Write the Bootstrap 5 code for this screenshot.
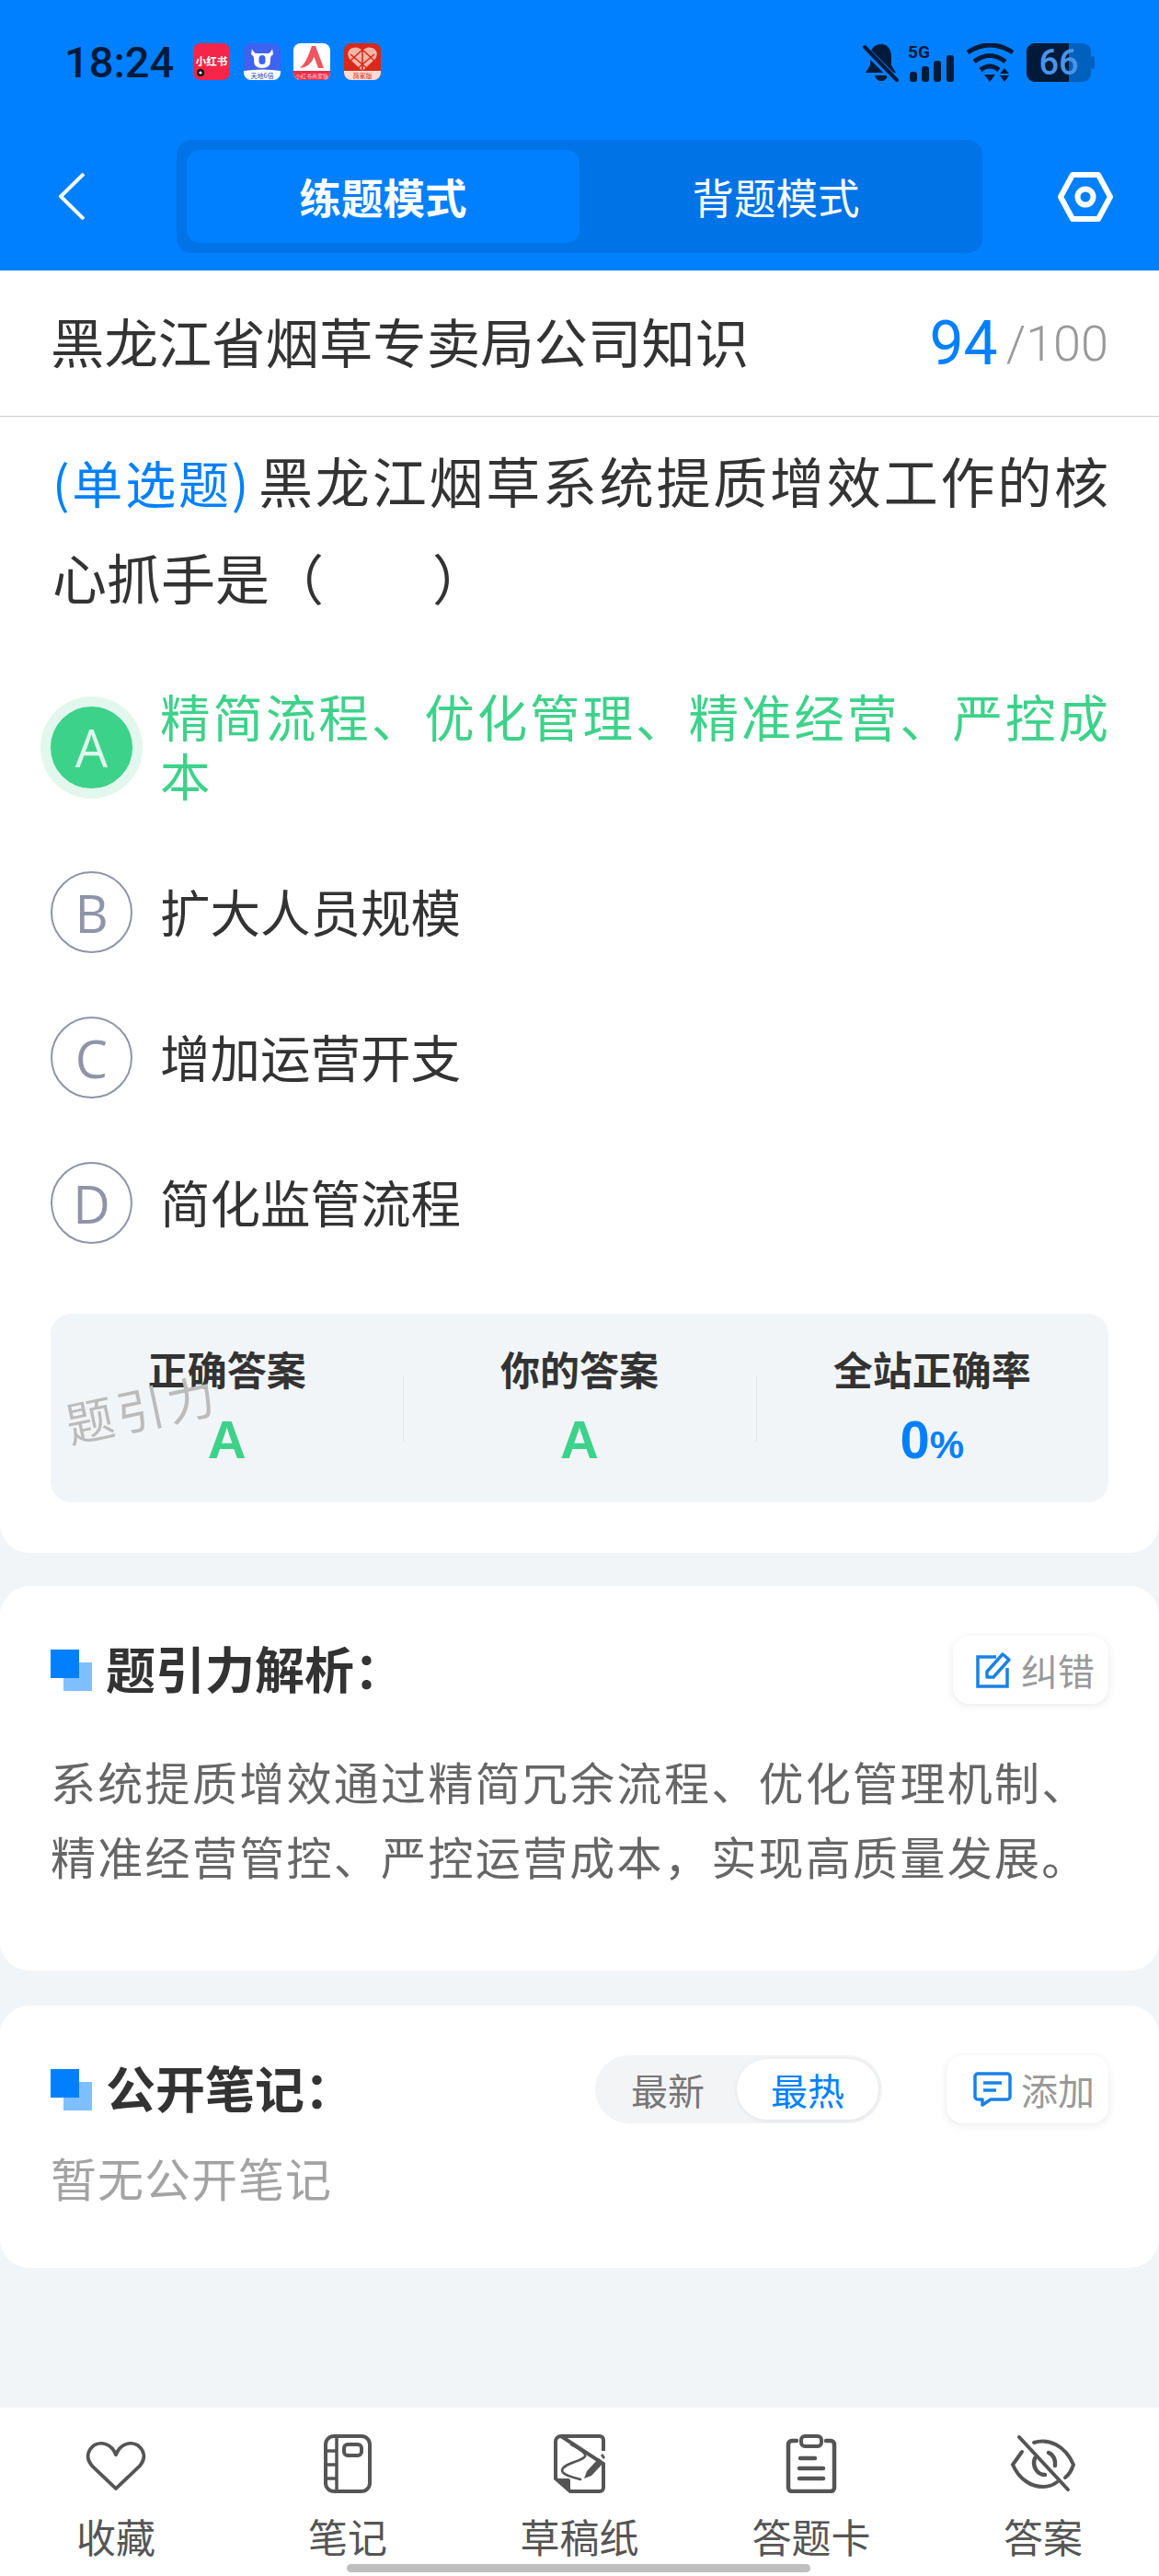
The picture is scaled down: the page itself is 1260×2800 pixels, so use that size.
<!DOCTYPE html>
<html lang="zh-CN">

<head>
    <meta charset="UTF-8">
    <meta name="viewport" content="width=device-width, initial-scale=1.0">
    <title>练题模式</title>
    <link href="https://cdn.jsdelivr.net/npm/bootstrap@5.3.3/dist/css/bootstrap.min.css" rel="stylesheet">
    <style>
        body {
            background-color: #f2f5f8;
            font-family: "Noto Sans CJK SC", "Liberation Sans", sans-serif;
            color: #333;
        }

        .screen {
            width: 1260px;
            height: 2800px;
            position: relative;
            overflow: hidden;
        }

        /* header */
        .top-head {
            background-color: #0080ff;
            height: 294px;
        }

        .status-row {
            height: 152px;
            padding: 47px 70px 0 70px;
            color: #001a3a;
        }

        .clock {
            font-family: Roboto, sans-serif;
            font-size: 47px;
            font-weight: 500;
            line-height: 42px;
            margin-right: 23px;
            width: 117px;
        }

        .app-ico {
            width: 40px;
            height: 40px;
            margin-right: 14.5px;
            display: block;
        }

        .sys-ico {
            display: block;
        }

        .mode-row {
            height: 123px;
            padding: 0 50px 0 64px;
        }

        .mode-switch {
            width: 876px;
            height: 123px;
            margin-left: 100px;
            margin-right: 82px;
            padding: 11px;
            background-color: #0073e6;
            border-radius: 16px;
        }

        .mode-btn {
            flex: 1 1 0;
            color: #fff;
            font-size: 45.5px;
            border-radius: 14px;
        }

        .mode-btn.on {
            background-color: #0080ff;
            font-weight: 700;
        }

        /* question card */
        .qcard {
            background-color: #fff;
            height: 1394px;
            border-radius: 0 0 32px 32px;
            position: relative;
        }

        .title-row {
            height: 159px;
            padding: 0 55px 6px 55px;
            border-bottom: 1px solid #ccc;
        }

        .title-text {
            font-size: 58.4px;
            color: #333;
        }

        .score-box {
            margin-top: 6px;
        }

        .score-now {
            font-family: Roboto, sans-serif;
            font-weight: 400;
            font-size: 66px;
            color: #0080ff;
        }

        .score-all {
            font-family: Roboto, sans-serif;
            font-weight: 300;
            font-size: 54px;
            color: #999;
            margin-left: 9px;
        }

        .qtext {
            padding: 16px 55px 0 57px;
            font-size: 59px;
            line-height: 105px;
            text-align: justify;
            margin-bottom: 67px;
        }

        .qtype {
            color: #0080ff;
            font-size: 55px;
            line-height: 1;
            margin-right: 8px;
        }

        .opt-row {
            padding: 0 55px 0 55px;
            margin-bottom: 69px;
        }

        .opt-ball {
            width: 89px;
            height: 89px;
            flex: none;
            border-radius: 50%;
            border: 2.5px solid #9094a8;
            color: #8f94a8;
            font-family: "Open Sans", sans-serif;
            font-size: 56px;
            font-weight: 400;
            margin-right: 30px;
        }

        .opt-ball.ok {
            background-color: #3dd28a;
            border-color: #3dd28a;
            color: #dff8ec;
            box-shadow: 0 0 0 11px #e2f7ed;
        }

        .opt-text {
            font-size: 54.5px;
            line-height: 64px;
            padding-bottom: 4px;
            color: #333;
            text-align: justify;
        }

        .opt-text.ok {
            color: #3dd28a;
        }

        .stat-box {
            margin: 76px 55px 0 55px;
            height: 205px;
            background-color: #f2f5f8;
            border-radius: 22px;
            position: relative;
        }

        .stat-col {
            flex: 1 1 0;
            text-align: center;
            padding-top: 29px;
            position: relative;
        }

        .stat-col + .stat-col::before {
            content: "";
            position: absolute;
            left: 0;
            top: 67px;
            height: 72px;
            width: 1px;
            background-color: #e3e6ea;
        }

        .stat-label {
            font-size: 43px;
            font-weight: 700;
            line-height: 60px;
            color: #333;
        }

        .stat-val {
            font-family: "Liberation Sans", sans-serif;
            font-size: 58px;
            font-weight: 700;
            line-height: 70px;
            margin-top: 13px;
        }

        .stat-val small {
            font-size: 42px;
            font-weight: 700;
        }

        .c-green {
            color: #3dd28a;
        }

        .c-blue {
            color: #0080ff;
        }

        .wmark {
            position: absolute;
            left: 15px;
            top: 72px;
            font-size: 52px;
            letter-spacing: 4px;
            line-height: 60px;
            color: #bbb;
            transform: rotate(-12deg);
            pointer-events: none;
        }

        /* analysis, notes */
        .info-card {
            background-color: #fff;
            border-radius: 32px;
            padding: 54px 55px 0 55px;
            margin-top: 36px;
        }

        .sq-ico {
            position: relative;
            width: 45px;
            height: 45px;
            flex: none;
            margin-right: 15px;
        }

        .sq-ico::before,
        .sq-ico::after {
            content: "";
            position: absolute;
            width: 31px;
            height: 31px;
        }

        .sq-ico::before {
            right: 0;
            bottom: 0;
            background-color: #80bfff;
        }

        .sq-ico::after {
            left: 0;
            top: 0;
            background-color: #0080ff;
        }

        .info-head {
            font-size: 54px;
            font-weight: 700;
            color: #333;
            line-height: 70px;
            padding-bottom: 4px;
        }

        .mini-btn {
            height: 74px;
            background-color: #fff;
            border-radius: 18px;
            box-shadow: 0 2px 10px rgba(0, 0, 0, 0.09);
            color: #999;
            font-size: 40px;
            padding: 0 15px 0 25px;
        }

        .mini-btn.wide {
            padding-left: 29px;
        }

        .mini-btn svg {
            margin-right: 10px;
        }

        .info-body {
            font-size: 49px;
            letter-spacing: 2.3px;
            line-height: 81px;
            color: #666;
            margin-top: 43px;
            white-space: nowrap;
        }

        .pill-switch {
            width: 312px;
            height: 74px;
            padding: 4px;
            background-color: #f3f4f6;
            border-radius: 37px;
            font-size: 40px;
            color: #777;
            margin-right: 70px;
        }

        .pill-switch > div {
            flex: 1 1 0;
            border-radius: 33px;
        }

        .pill-switch .on {
            flex: 0 0 154px;
            background-color: #fff;
            color: #0080ff;
            box-shadow: 0 1px 5px rgba(0, 0, 0, 0.08);
        }

        .empty-note {
            font-size: 50px;
            letter-spacing: 1px;
            color: #a3a3a3;
            line-height: 60px;
            margin-top: 28px;
        }

        /* bottom tabs */
        .tab-bar {
            position: absolute;
            left: 0;
            right: 0;
            bottom: 0;
            height: 183px;
            background-color: #fff;
        }

        .tab-item {
            flex: 1 1 0;
            color: #555;
            font-size: 43px;
            line-height: 50px;
            padding-top: 29px;
        }

        .tab-ico {
            height: 64px;
            margin-bottom: 21px;
        }

        .home-bar {
            position: absolute;
            left: 377px;
            top: 2787px;
            width: 504px;
            height: 9px;
            border-radius: 5px;
            background-color: #bfbfbf;
        }
    </style>
</head>

<body>
    <div class="screen d-flex flex-column">
        <!-- blue header -->
        <div class="top-head">
            <div class="status-row d-flex align-items-start">
                <div class="clock">18:24</div>
                <svg class="app-ico" viewBox="0 0 40 40">
                    <rect width="40" height="40" rx="8" fill="#f5254a" />
                    <text x="20" y="24" text-anchor="middle" font-size="11.5" font-weight="700" fill="#fff" font-family="Noto Sans CJK SC">小红书</text>
                    <circle cx="8" cy="32" r="4" fill="#111" />
                    <circle cx="8" cy="32" r="1.6" fill="#fff" />
                </svg>
                <svg class="app-ico" viewBox="0 0 40 40">
                    <rect width="40" height="40" rx="8" fill="#3d63f0" />
                    <path d="M0 30 Q20 27 40 30 V32 a8 8 0 0 1 -8 8 H8 a8 8 0 0 1 -8 -8 Z" fill="#fff" />
                    <path d="M9 6 Q11 11 14 11 H26 Q29 11 31 6 L32 12 Q29 14 29 16 V19 Q29 27 20 27 Q11 27 11 19 V16 Q11 14 8 12 Z" fill="#fff" />
                    <rect x="16.5" y="13" width="7" height="10" rx="3.5" fill="#3d63f0" />
                    <text x="20" y="37.5" text-anchor="middle" font-size="7" fill="#2140b8" font-family="Noto Sans CJK SC">天地6倍</text>
                </svg>
                <svg class="app-ico" viewBox="0 0 40 40">
                    <rect width="40" height="40" rx="8" fill="#fff" />
                    <path d="M0 30 H40 V32 a8 8 0 0 1 -8 8 H8 a8 8 0 0 1 -8 -8 Z" fill="#ea2c4e" />
                    <path d="M7 27 Q13 22 17 11 L20 3 H24 L33 27 H27 L22.5 15 Q18 26 7 27 Z" fill="#ee5560" />
                    <text x="20" y="37.5" text-anchor="middle" font-size="6" fill="#ffd4da" font-family="Noto Sans CJK SC">小红书商家版</text>
                </svg>
                <svg class="app-ico" viewBox="0 0 40 40">
                    <rect width="40" height="40" rx="8" fill="#d8291c" />
                    <path d="M0 30 H40 V32 a8 8 0 0 1 -8 8 H8 a8 8 0 0 1 -8 -8 Z" fill="#fbdcd3" />
                    <path d="M20 30 L6 17 Q2 11 7 6 Q14 2 20 8 Q26 2 33 6 Q38 11 34 17 Z" fill="#f5b6a8" />
                    <path d="M20 8 V30 M7 12 L27 29 M33 12 L13 29 M7 19 L20 7 M33 19 L20 7" stroke="#d8291c" stroke-width="1.6" fill="none" />
                    <text x="20" y="37.5" text-anchor="middle" font-size="7" fill="#d8291c" font-family="Noto Sans CJK SC">商家版</text>
                </svg>
                <div class="d-flex ms-auto">
                    <svg class="sys-ico" width="40" height="42" viewBox="0 0 40 42">
                        <path d="M20 1 C12 1 8 7 8 14 V24 L3 32 H36 L31 24 V14 C31 7 27 1 20 1 Z M13 35 H27 C26 39 23 41 20 41 C17 41 14 39 13 35 Z" fill="#001a3a" />
                        <path d="M1 5 L37 41" stroke="#0080ff" stroke-width="8" />
                        <path d="M2 4 L37 40" stroke="#001a3a" stroke-width="4" stroke-linecap="round" />
                    </svg>
                    <svg class="sys-ico ms-2" width="54" height="42" viewBox="0 0 54 42">
                        <text x="1" y="16" font-size="19" font-weight="700" fill="#001a3a" font-family="Roboto">5G</text>
                        <rect x="3" y="31" width="8" height="11" rx="3" fill="#001a3a" />
                        <rect x="16" y="25" width="8" height="17" rx="3" fill="#001a3a" />
                        <rect x="29" y="19" width="8" height="23" rx="3" fill="#001a3a" />
                        <rect x="43" y="13" width="8" height="29" rx="3" fill="#001a3a" />
                    </svg>
                    <svg class="sys-ico" width="54" height="42" viewBox="0 0 54 42" style="margin-left:10px">
                        <g fill="none" stroke="#001a3a" stroke-width="5">
                            <path d="M2 10 Q26 -6 51 10" />
                            <path d="M9 20 Q26 7 43 20" />
                            <path d="M16 29 Q26 21 36 29" />
                        </g>
                        <path d="M20 34 H32 L26 42 Z" fill="#001a3a" />
                        <path d="M42 27 L47 33 H37 Z M37 35 H47 L42 42 Z" fill="#001a3a" />
                    </svg>
                    <svg class="sys-ico" width="74" height="42" viewBox="0 0 74 42" style="margin-left:12px">
                        <rect width="70" height="42" rx="9" fill="#0060bd" />
                        <path d="M9 0 H46 V42 H9 a9 9 0 0 1 -9 -9 V9 a9 9 0 0 1 9 -9 Z" fill="#001a3a" />
                        <rect x="70" y="14" width="4" height="14" rx="2" fill="#0060bd" />
                        <text x="35" y="34" text-anchor="middle" font-size="38" font-weight="500" fill="#4a94e8" font-family="Roboto">66</text>
                    </svg>
                </div>
            </div>
            <div class="mode-row d-flex align-items-center">
                <svg width="28" height="51" viewBox="0 0 28 51" class="flex-none">
                    <path d="M27 1 L2 25.5 L27 50" fill="none" stroke="#fff" stroke-width="4" />
                </svg>
                <div class="mode-switch d-flex">
                    <div class="mode-btn on d-flex align-items-center justify-content-center">练题模式</div>
                    <div class="mode-btn d-flex align-items-center justify-content-center">背题模式</div>
                </div>
                <svg width="60" height="54" viewBox="0 0 60 54">
                    <path d="M16 3 H44 L57 27 L44 51 H16 L3 27 Z" fill="none" stroke="#fff" stroke-width="6" stroke-linejoin="round" />
                    <circle cx="30" cy="27" r="8.5" fill="none" stroke="#fff" stroke-width="6" />
                </svg>
            </div>
        </div>

        <!-- question -->
        <div class="qcard">
            <div class="title-row d-flex align-items-center justify-content-between">
                <div class="title-text">黑龙江省烟草专卖局公司知识</div>
                <div class="score-box d-flex align-items-center">
                    <span class="score-now">94</span><span class="score-all">/100</span>
                </div>
            </div>
            <div class="qtext"><span class="qtype">(单选题)</span>黑龙江烟草系统提质增效工作的核心抓手是（&emsp;&emsp;）</div>

            <div class="opt-row d-flex align-items-center">
                <div class="opt-ball ok d-flex align-items-center justify-content-center">A</div>
                <div class="opt-text ok">精简流程、优化管理、精准经营、严控成本</div>
            </div>
            <div class="opt-row d-flex align-items-center">
                <div class="opt-ball d-flex align-items-center justify-content-center">B</div>
                <div class="opt-text">扩大人员规模</div>
            </div>
            <div class="opt-row d-flex align-items-center">
                <div class="opt-ball d-flex align-items-center justify-content-center">C</div>
                <div class="opt-text">增加运营开支</div>
            </div>
            <div class="opt-row d-flex align-items-center">
                <div class="opt-ball d-flex align-items-center justify-content-center">D</div>
                <div class="opt-text">简化监管流程</div>
            </div>

            <div class="stat-box d-flex">
                <div class="stat-col">
                    <div class="stat-label">正确答案</div>
                    <div class="stat-val c-green">A</div>
                </div>
                <div class="stat-col">
                    <div class="stat-label">你的答案</div>
                    <div class="stat-val c-green">A</div>
                </div>
                <div class="stat-col">
                    <div class="stat-label">全站正确率</div>
                    <div class="stat-val c-blue">0<small>%</small></div>
                </div>
                <div class="wmark">题引力</div>
            </div>
        </div>

        <!-- analysis -->
        <div class="info-card" style="height: 418px;">
            <div class="d-flex align-items-center">
                <div class="sq-ico"></div>
                <div class="info-head">题引力解析：</div>
                <div class="mini-btn d-flex align-items-center ms-auto">
                    <svg width="39" height="40" viewBox="0 0 39 40">
                        <path d="M22 6 H2 V38 H34 V18" fill="none" stroke="#1a82e6" stroke-width="3.5" />
                        <path d="M12 22 L29 3 L36 9 L19 28 H12 Z" fill="none" stroke="#1a82e6" stroke-width="3.5" stroke-linejoin="round" />
                    </svg>
                    <span>纠错</span>
                </div>
            </div>
            <div class="info-body">系统提质增效通过精简冗余流程、优化管理机制、<br>精准经营管控、严控运营成本，实现高质量发展。</div>
        </div>

        <!-- notes -->
        <div class="info-card" style="height: 285px; margin-top: 38px;">
            <div class="d-flex align-items-center">
                <div class="sq-ico"></div>
                <div class="info-head">公开笔记：</div>
                <div class="pill-switch d-flex ms-auto">
                    <div class="d-flex align-items-center justify-content-center">最新</div>
                    <div class="on d-flex align-items-center justify-content-center">最热</div>
                </div>
                <div class="mini-btn wide d-flex align-items-center">
                    <svg width="42" height="38" viewBox="0 0 42 38">
                        <path d="M5 2 H37 a3 3 0 0 1 3 3 V27 a3 3 0 0 1 -3 3 H19 L10 36 V30 H5 a3 3 0 0 1 -3 -3 V5 a3 3 0 0 1 3 -3 Z" fill="none" stroke="#1a82e6" stroke-width="3.5" stroke-linejoin="round" />
                        <path d="M11 12 H31 M11 20 H25" stroke="#1a82e6" stroke-width="3.5" />
                    </svg>
                    <span>添加</span>
                </div>
            </div>
            <div class="empty-note">暂无公开笔记</div>
        </div>

        <!-- bottom bar -->
        <div class="tab-bar d-flex">
            <div class="tab-item d-flex flex-column align-items-center">
                <svg class="tab-ico" width="66" height="64" viewBox="0 0 66 64">
                    <path d="M33 22 C28 8 16 6 9 11 C1 18 1 27 7 35 L33 62 L59 35 C65 27 65 18 57 11 C50 6 38 8 33 22 Z" fill="none" stroke="#555" stroke-width="4" stroke-linejoin="round" transform="translate(0 2) scale(1 .92)" />
                </svg>
                <div>收藏</div>
            </div>
            <div class="tab-item d-flex flex-column align-items-center">
                <svg class="tab-ico" width="52" height="64" viewBox="0 0 52 64">
                    <rect x="2" y="2" width="48" height="60" rx="9" fill="none" stroke="#555" stroke-width="4" />
                    <path d="M14 2 V62 M2 18 H14 M2 33 H14 M2 48 H14" stroke="#555" stroke-width="3.5" fill="none" />
                    <rect x="22" y="11" width="19" height="12" rx="4" fill="none" stroke="#555" stroke-width="4" />
                </svg>
                <div>笔记</div>
            </div>
            <div class="tab-item d-flex flex-column align-items-center">
                <svg class="tab-ico" width="56" height="64" viewBox="0 0 56 64">
                    <path d="M8 2 H50 a4 4 0 0 1 4 4 V18 M54 32 V58 a4 4 0 0 1 -4 4 H18 L2 48 V8 a6 6 0 0 1 6 -6 Z" fill="none" stroke="#555" stroke-width="4" />
                    <path d="M2 48 H16 a2 2 0 0 1 2 2 V62 Z" fill="#555" />
                    <path d="M19 11 C26 15 36 20 34 24 C30 30 11 31 9 39 C9 44 21 47 29 49" fill="none" stroke="#555" stroke-width="2.6" stroke-linecap="round" />
                    <path d="M36 40 L49 26 L54 31 L41 45 L33 48 Z" fill="#555" />
                    <path d="M51 23 L53 21 L56 25 L54 27 Z" fill="#555" />
                </svg>
                <div>草稿纸</div>
            </div>
            <div class="tab-item d-flex flex-column align-items-center">
                <svg class="tab-ico" width="56" height="64" viewBox="0 0 56 64">
                    <path d="M12 7 H7 a4 4 0 0 0 -4 4 V58 a4 4 0 0 0 4 4 H49 a4 4 0 0 0 4 -4 V11 a4 4 0 0 0 -4 -4 H44" fill="none" stroke="#555" stroke-width="4.5" stroke-linecap="round" />
                    <rect x="17" y="2" width="22" height="11" rx="4" fill="none" stroke="#555" stroke-width="4" />
                    <path d="M16 26 H32 M15 37 H41 M15 48 H41" stroke="#555" stroke-width="4.5" stroke-linecap="round" />
                </svg>
                <div>答题卡</div>
            </div>
            <div class="tab-item d-flex flex-column align-items-center">
                <svg class="tab-ico" width="72" height="64" viewBox="0 0 72 64">
                    <path d="M13 19 L3 33 C10 49 23 57 36 57 C42 57 47 55 51 52 M26 9 C42 4 60 12 69 33 C67 39 64 44 60 47" fill="none" stroke="#555" stroke-width="4" stroke-linecap="round" />
                    <path d="M42 20 C47 22 50 28 49 34 M27 26 C24 34 29 44 38 44" fill="none" stroke="#555" stroke-width="4.5" stroke-linecap="round" />
                    <path d="M10 3 L63 60" stroke="#555" stroke-width="4" stroke-linecap="round" />
                </svg>
                <div>答案</div>
            </div>
        </div>
        <div class="home-bar"></div>
    </div>

    <script src="https://cdn.jsdelivr.net/npm/bootstrap@5.3.3/dist/js/bootstrap.bundle.min.js"></script>
</body>

</html>
